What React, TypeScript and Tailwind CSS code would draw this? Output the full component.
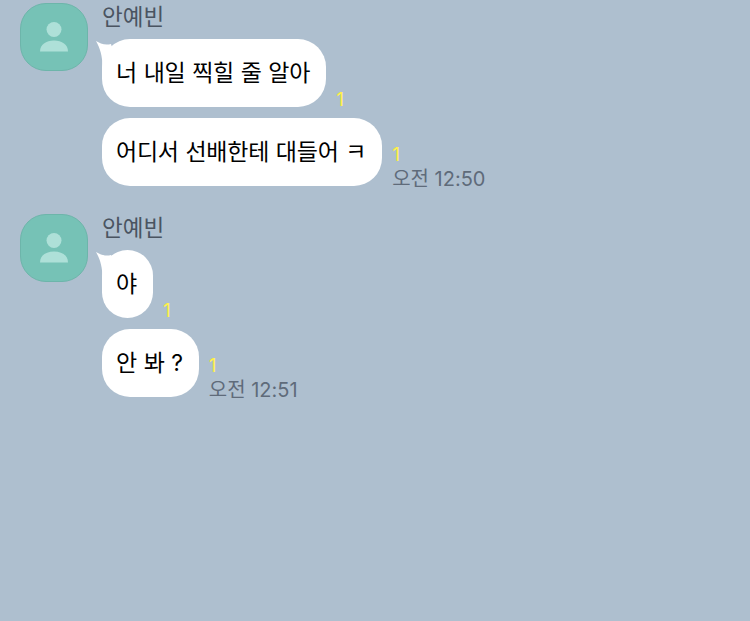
const FONT = "font-['Inter','Noto_Sans_CJK_KR',sans-serif]"

function Avatar() {
  return (
    <div className="flex h-[68px] w-[68px] shrink-0 items-center justify-center rounded-[26px] border border-[#6db5aa] bg-[#76c2b6]">
      <svg width="28" height="30" viewBox="0 0 28 30" fill="#aee0d8">
        <circle cx="14" cy="7.5" r="7.5" />
        <path d="M0 29.5c0-7 6-11 14-11s14 4 14 11z" />
      </svg>
    </div>
  )
}

function Bubble({ text, tail }: { text: string; tail?: boolean }) {
  return (
    <div className="relative flex h-[68px] items-center rounded-[28px] bg-white pl-[14px] pr-[16px] text-[23px] tracking-[-0.25px] text-black [word-spacing:0.5px]">
      {tail && (
        <svg className="absolute left-[-6px] top-[2px]" width="20" height="30" viewBox="0 0 20 30" fill="#fff">
          <path d="M0 0C4 2.5 9 4.5 15 3L20 20 6.5 26C6.5 15 4 7 0 0z" />
        </svg>
      )}
      <span className="relative whitespace-pre">{text}</span>
    </div>
  )
}

function Row({ text, tail, time }: { text: string; tail?: boolean; time?: string }) {
  return (
    <div className="flex items-end gap-[10px]">
      <Bubble text={text} tail={tail} />
      <div className="-mb-[3px] flex flex-col items-start">
        <span className="text-[19px] leading-[21px] text-[#fff04a]">1</span>
        {time && <span className="-mb-[2px] mt-[2px] text-[20px] leading-[24px] text-[#5f6b7a]">{time}</span>}
      </div>
    </div>
  )
}

function Group({ name, rows }: { name: string; rows: { text: string; time?: string }[] }) {
  return (
    <div className="flex gap-[14px]">
      <Avatar />
      <div className="flex flex-col">
        <div className="h-[36px] text-[22.5px] leading-[28px] text-[#4a5461]">{name}</div>
        <div className="flex flex-col gap-[11px]">
          {rows.map((r, i) => (
            <Row key={i} text={r.text} time={r.time} tail={i === 0} />
          ))}
        </div>
      </div>
    </div>
  )
}

export default function App() {
  return (
    <div className={`${FONT} flex h-[621px] w-[750px] flex-col gap-[28px] overflow-hidden bg-[#aebfcf] pl-[20px] pt-[3px]`}>
      <Group
        name="안예빈"
        rows={[
          { text: '너 내일 찍힐 줄 알아' },
          { text: '어디서 선배한테 대들어 ㅋ', time: '오전 12:50' },
        ]}
      />
      <Group
        name="안예빈"
        rows={[
          { text: '야' },
          { text: '안 봐 ?', time: '오전 12:51' },
        ]}
      />
    </div>
  )
}
